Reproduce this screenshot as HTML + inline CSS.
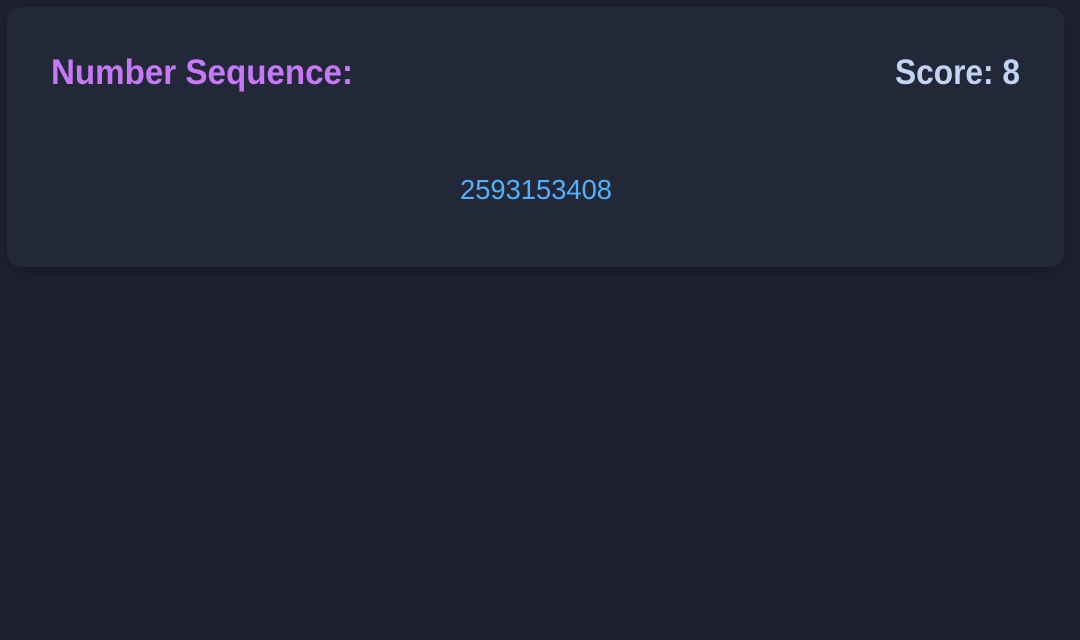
<!DOCTYPE html>
<html><head><style>
html,body{margin:0;padding:0;background:#1e2230;width:1080px;height:640px;overflow:hidden}
.card{position:absolute;left:7px;top:7px;width:1057px;height:260px;background:#232838;border-radius:14px;box-shadow:0 6px 16px rgba(0,0,0,0.25)}
svg{position:absolute;left:0;top:0}
</style></head><body>
<div class="card"></div>
<svg width="1080" height="640" xmlns="http://www.w3.org/2000/svg">
<text x="51" y="84" font-family="Liberation Sans, sans-serif" font-size="35" font-weight="bold" fill="#c678f8" textLength="302" lengthAdjust="spacingAndGlyphs">Number Sequence:</text>
<text x="895" y="84" font-family="Liberation Sans, sans-serif" font-size="35" font-weight="bold" fill="#c2d3f4" textLength="125" lengthAdjust="spacingAndGlyphs">Score: 8</text>
<text x="460" y="199" font-family="Liberation Sans, sans-serif" font-size="28" fill="#52b1fa" textLength="152" lengthAdjust="spacingAndGlyphs">2593153408</text>
</svg>
</body></html>
